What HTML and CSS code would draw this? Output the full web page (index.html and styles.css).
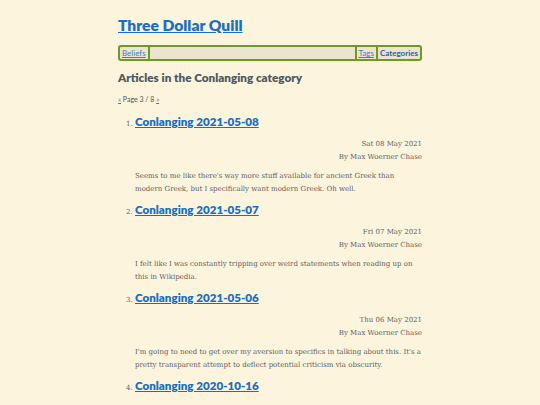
FILE: index.html
```html
<!DOCTYPE html>
<html>
<head>
<meta charset="utf-8">
<link rel="stylesheet" href="styles.css">
</head>
<body>
<div class="page">
  <h1 class="site-title"><a href="#">Three Dollar Quill</a></h1>
  <nav class="nav">
    <a class="nav-item sep-right" href="#">Beliefs</a>
    <span class="nav-fill"></span>
    <a class="nav-item sep-left" href="#">Tags</a>
    <a class="nav-item sep-left current" href="#">Categories</a>
  </nav>
  <h2 class="heading">Articles in the Conlanging category</h2>
  <p class="pager"><a href="#">«</a> Page 3 / 8 <a href="#">»</a></p>
  <ol class="articles" start="1">
    <li class="article">
      <h3 class="article-title"><a href="#">Conlanging 2021-05-08</a></h3>
      <div class="meta">
        <div>Sat 08 May 2021</div>
        <div>By Max Woerner Chase</div>
      </div>
      <p class="summary">Seems to me like there's way more stuff available for ancient Greek than modern Greek, but I specifically want modern Greek. Oh well.</p>
    </li>
    <li class="article">
      <h3 class="article-title"><a href="#">Conlanging 2021-05-07</a></h3>
      <div class="meta">
        <div>Fri 07 May 2021</div>
        <div>By Max Woerner Chase</div>
      </div>
      <p class="summary">I felt like I was constantly tripping over weird statements when reading up on this in Wikipedia.</p>
    </li>
    <li class="article">
      <h3 class="article-title"><a href="#">Conlanging 2021-05-06</a></h3>
      <div class="meta">
        <div>Thu 06 May 2021</div>
        <div>By Max Woerner Chase</div>
      </div>
      <p class="summary">I'm going to need to get over my aversion to specifics in talking about this. It's a pretty transparent attempt to deflect potential criticism via obscurity.</p>
    </li>
    <li class="article">
      <h3 class="article-title"><a href="#">Conlanging 2020-10-16</a></h3>
    </li>
  </ol>
</div>
</body>
</html>
```

FILE: styles.css
```css
html, body {
  margin: 0;
  padding: 0;
  background: #fcf4dd;
}
body {
  font-family: "DejaVu Serif", serif;
  color: #555;
}
.page {
  width: 304px;
  margin: 0 auto;
  padding-top: 14px;
}
a {
  color: #1a6fc4;
}
.site-title {
  font-family: "Lato", "Open Sans", sans-serif;
  font-size: 15.6px;
  font-weight: 800;
  margin: 0 0 9px 0;
  line-height: 22px;
}
.nav {
  display: flex;
  align-items: stretch;
  border: 2px solid #6b9b23;
  border-radius: 3px;
  background: #ebe4cf;
  height: 12px;
  font-family: "Lato", "Open Sans", sans-serif;
  font-size: 8px;
  line-height: 12px;
}
.nav-item {
  padding: 0 2px;
  color: #3f7fc0;
}
.sep-right {
  border-right: 2px solid #6b9b23;
}
.sep-left {
  border-left: 2px solid #6b9b23;
}
.nav-fill {
  flex: 1;
}
.current {
  font-weight: 700;
  text-decoration: none;
  color: #2a63a8;
}
.heading {
  font-family: "Lato", "Open Sans", sans-serif;
  font-size: 11.7px;
  font-weight: 800;
  color: #4e5a63;
  margin: 8px 0 0 0;
  line-height: 16px;
}
.pager {
  font-family: "Lato", "Open Sans", sans-serif;
  font-size: 7px;
  margin: 9px 0 0 0;
  line-height: 10px;
  color: #555;
}
.pager a {
  color: #3f7fc0;
}
.articles {
  margin: 0;
  padding: 4px 0 0 17px;
  font-size: 7px;
}
.article {
  margin: 0;
}
.article::marker {
  font-family: "DejaVu Serif", serif;
  font-size: 7px;
  color: #666;
}
.article-title {
  font-family: "Lato", "Open Sans", sans-serif;
  font-size: 11.6px;
  font-weight: 800;
  margin: 6px 0 0 0;
  line-height: 16px;
}
.meta {
  text-align: right;
  font-size: 7px;
  line-height: 13px;
  margin-top: 8px;
  color: #5f5f5f;
}
.summary {
  font-size: 7px;
  line-height: 13px;
  margin: 6px 0 0 0;
  color: #5f5f5f;
}
```
